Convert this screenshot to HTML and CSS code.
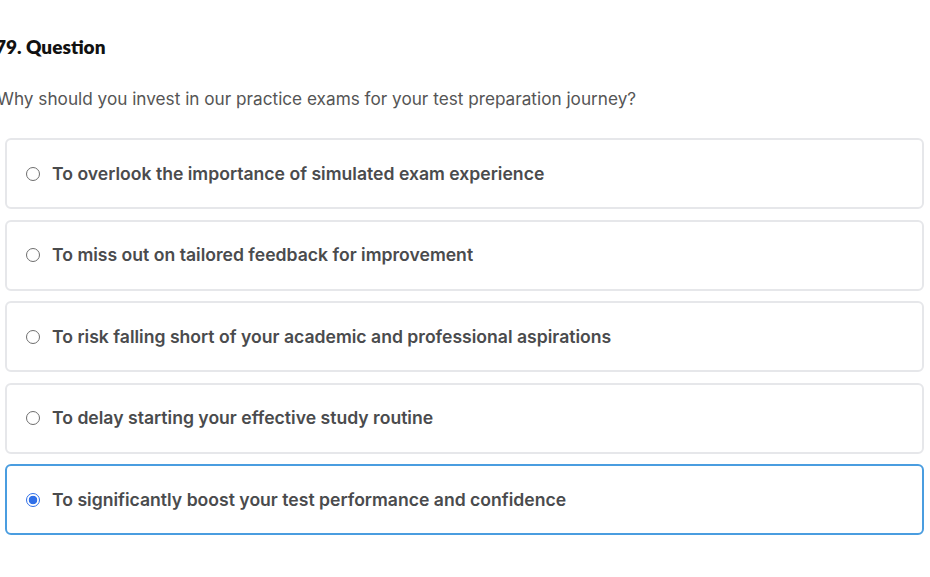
FILE: index.html
```html
<!DOCTYPE html>
<html>
<head>
<meta charset="utf-8">
<link rel="stylesheet" href="styles.css">
</head>
<body>
<div class="quiz">
  <h2 class="title">79. Question</h2>
  <p class="prompt">Why should you invest in our practice exams for your test preparation journey?</p>
  <div class="options">
    <label class="option"><span class="radio"></span><span class="label">To overlook the importance of simulated exam experience</span></label>
    <label class="option"><span class="radio"></span><span class="label">To miss out on tailored feedback for improvement</span></label>
    <label class="option"><span class="radio"></span><span class="label">To risk falling short of your academic and professional aspirations</span></label>
    <label class="option"><span class="radio"></span><span class="label">To delay starting your effective study routine</span></label>
    <label class="option selected"><span class="radio"></span><span class="label">To significantly boost your test performance and confidence</span></label>
  </div>
</div>
</body>
</html>
```

FILE: styles.css
```css
html, body {
  margin: 0;
  padding: 0;
  background: #ffffff;
}
.quiz {
  padding: 36px 6px 0 5px;
  font-family: Inter, "Noto Sans", sans-serif;
}
.title {
  margin: 0 0 0 -10px;
  font-family: Lato, "Noto Sans", sans-serif;
  font-weight: 800;
  font-size: 19px;
  line-height: 22px;
  color: #111111;
}
.prompt {
  margin: 29px 0 0 -8px;
  font-size: 17.2px;
  line-height: 24px;
  color: #555555;
}
.options {
  margin-top: 27px;
  display: flex;
  flex-direction: column;
  gap: 10.5px;
}
.option {
  box-sizing: border-box;
  height: 71px;
  display: flex;
  align-items: center;
  padding-left: 19px;
  border: 2px solid #e6e7ea;
  border-radius: 6px;
}
.option.selected {
  border-color: #4a9de0;
}
.radio {
  box-sizing: border-box;
  width: 14px;
  height: 14px;
  border-radius: 50%;
  border: 1px solid #6e6e6e;
  margin-right: 12px;
  flex: none;
}
.selected .radio {
  border: 1.5px solid #2f6fe8;
  background: radial-gradient(circle, #2f6fe8 0 4px, #ffffff 4.6px);
}
.label {
  font-size: 17.6px;
  font-weight: 600;
  color: #4a4b4d;
  line-height: 24px;
}
```
